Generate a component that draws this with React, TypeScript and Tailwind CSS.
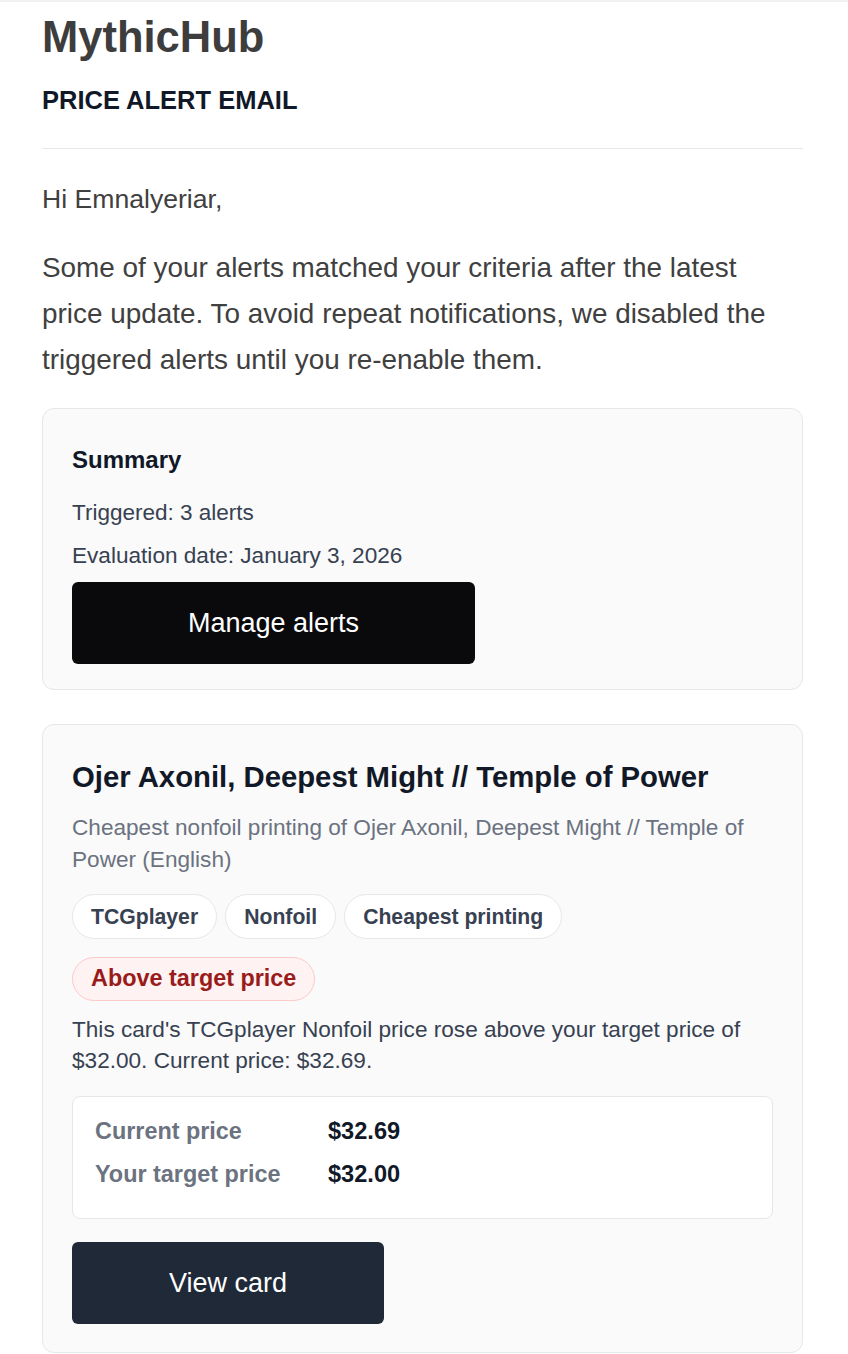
const font = { fontFamily: '"Liberation Sans", Arial, sans-serif' };

function Chip({ label }: { label: string }) {
  return (
    <span className="inline-flex h-[45px] items-center rounded-full border border-[#e5e7eb] bg-white px-[18px] text-[21.2px] font-bold text-[#374151]">
      {label}
    </span>
  );
}

function PriceRow({ label, value }: { label: string; value: string }) {
  return (
    <div className="flex h-[30px] items-center">
      <span className="w-[233px] text-[23.4px] font-bold text-[#6b7280]">{label}</span>
      <span className="text-[23.6px] font-bold text-[#111827]">{value}</span>
    </div>
  );
}

export default function App() {
  return (
    <div className="min-h-[1354px] border-t-2 border-[#f1f1f1] bg-white" style={font}>
      <div className="ml-[42px] w-[761px]">
        <h1 className="pt-[10px] text-[43.5px] font-bold leading-[50px] text-[#3d3d3d]">MythicHub</h1>
        <h2 className="mt-[23px] text-[25.5px] font-bold uppercase leading-[30px] text-[#111827]">
          Price alert email
        </h2>
        <div className="mt-[33px] border-t border-[#e5e7eb]" />

        <p className="mt-[34px] text-[26.6px] leading-[32px] text-[#404040]">Hi Emnalyeriar,</p>
        <p className="mt-[30px] text-[27.9px] leading-[46px] text-[#404040]">
          Some of your alerts matched your criteria after the latest price update. To avoid repeat
          notifications, we disabled the triggered alerts until you re-enable them.
        </p>

        <div className="mt-[25px] rounded-[12px] border border-[#e5e7eb] bg-[#fafafa] px-[29px] pb-[25px] pt-[35px]">
          <h3 className="text-[24px] font-bold leading-[32px] text-[#111827]">Summary</h3>
          <p className="mt-[21px] text-[22.5px] leading-[32px] text-[#374151]">Triggered: 3 alerts</p>
          <p className="mt-[11px] text-[22.6px] leading-[32px] text-[#374151]">
            Evaluation date: January 3, 2026
          </p>
          <button className="mt-[10px] flex h-[82px] w-[403px] items-center justify-center rounded-[6px] bg-[#0a0a0c] text-[27px] text-white">
            Manage alerts
          </button>
        </div>

        <div className="mt-[34px] rounded-[12px] border border-[#e5e7eb] bg-[#fafafa] px-[29px] pb-[28px] pt-[33px]">
          <h3 className="text-[29.3px] font-bold leading-[38px] text-[#111827]">
            Ojer Axonil, Deepest Might // Temple of Power
          </h3>
          <p className="mt-[16px] text-[22.6px] leading-[32px] text-[#6b7280]">
            Cheapest nonfoil printing of Ojer Axonil, Deepest Might // Temple of Power (English)
          </p>
          <div className="mt-[18px] flex gap-[8px]">
            <Chip label="TCGplayer" />
            <Chip label="Nonfoil" />
            <Chip label="Cheapest printing" />
          </div>
          <div className="mt-[18px] flex">
            <span className="inline-flex h-[44px] items-center rounded-full border border-[#fecaca] bg-[#fef2f2] px-[18px] text-[23.4px] font-bold text-[#991b1b]">
              Above target price
            </span>
          </div>
          <p className="mt-[13px] text-[22.6px] leading-[31px] text-[#374151]">
            This card's TCGplayer Nonfoil price rose above your target price of $32.00. Current
            price: $32.69.
          </p>
          <div className="mt-[20px] flex flex-col gap-[13px] rounded-[8px] border border-[#e5e7eb] bg-white px-[22px] pb-[28px] pt-[20px]">
            <PriceRow label="Current price" value="$32.69" />
            <PriceRow label="Your target price" value="$32.00" />
          </div>
          <button className="mt-[23px] flex h-[82px] w-[312px] items-center justify-center rounded-[6px] bg-[#1f2937] text-[27px] text-white">
            View card
          </button>
        </div>
      </div>
    </div>
  );
}
